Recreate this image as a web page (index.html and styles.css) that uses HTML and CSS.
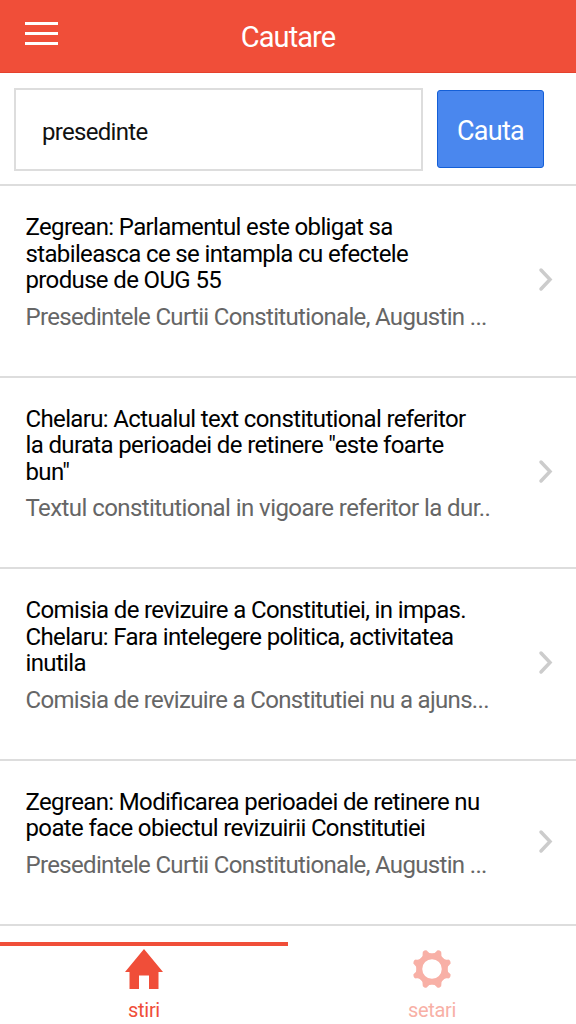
FILE: index.html
```html
<!DOCTYPE html>
<html lang="ro">
<head>
    <meta charset="UTF-8">
    <meta name="viewport" content="width=device-width, initial-scale=1.0">
    <title>Cautare</title>
    <link rel="stylesheet" href="styles.css">
</head>
<body>
    <header class="header">
        <button class="menu-button" aria-label="Meniu">
            <span></span>
            <span></span>
            <span></span>
        </button>
        <h1>Cautare</h1>
    </header>

    <form class="search">
        <input type="text" class="search-input" value="presedinte">
        <button type="button" class="search-button">Cauta</button>
    </form>

    <ul class="results">
        <li class="result">
            <div class="result-text">
                <h2>Zegrean: Parlamentul este obligat sa<br>stabileasca ce se intampla cu efectele<br>produse de OUG 55</h2>
                <p>Presedintele Curtii Constitutionale, Augustin ...</p>
            </div>
            <svg class="arrow" viewBox="0 0 16 25"><path d="M3 3l9 9.5L3 22"/></svg>
        </li>
        <li class="result">
            <div class="result-text">
                <h2>Chelaru: Actualul text constitutional referitor<br>la durata perioadei de retinere "este foarte<br>bun"</h2>
                <p class="wide">Textul constitutional in vigoare referitor la dur..</p>
            </div>
            <svg class="arrow" viewBox="0 0 16 25"><path d="M3 3l9 9.5L3 22"/></svg>
        </li>
        <li class="result">
            <div class="result-text">
                <h2>Comisia de revizuire a Constitutiei, in impas.<br>Chelaru: Fara intelegere politica, activitatea<br>inutila</h2>
                <p>Comisia de revizuire a Constitutiei nu a ajuns...</p>
            </div>
            <svg class="arrow" viewBox="0 0 16 25"><path d="M3 3l9 9.5L3 22"/></svg>
        </li>
        <li class="result result-short">
            <div class="result-text">
                <h2>Zegrean: Modificarea perioadei de retinere nu<br>poate face obiectul revizuirii Constitutiei</h2>
                <p>Presedintele Curtii Constitutionale, Augustin ...</p>
            </div>
            <svg class="arrow" viewBox="0 0 16 25"><path d="M3 3l9 9.5L3 22"/></svg>
        </li>
    </ul>

    <nav class="tabs">
        <a class="tab active">
            <svg class="tab-icon" viewBox="0 0 40 40"><path d="M20 0L1 23h4.500v17H15V26.500h10V40h9.500V23H39z"/></svg>
            <span>stiri</span>
        </a>
        <a class="tab">
            <svg class="tab-icon" viewBox="-20.5 -20.5 41 41">
                <circle r="13" fill="none" stroke="currentColor" stroke-width="6"/>
                <g transform="rotate(22.5)">
                    <path id="tooth" d="M-6.2 -14.500Q-3 -16 -2.800 -18.300Q-2.500 -20.400 0 -20.400Q2.500 -20.400 2.800 -18.300Q3 -16 6.200 -14.500L0 -13z"/>
                    <use href="#tooth" transform="rotate(45)"/>
                    <use href="#tooth" transform="rotate(90)"/>
                    <use href="#tooth" transform="rotate(135)"/>
                    <use href="#tooth" transform="rotate(180)"/>
                    <use href="#tooth" transform="rotate(225)"/>
                    <use href="#tooth" transform="rotate(270)"/>
                    <use href="#tooth" transform="rotate(315)"/>
                </g>
            </svg>
            <span>setari</span>
        </a>
    </nav>
</body>
</html>
```
FILE: styles.css
```css
* {
    box-sizing: border-box;
}
body {
    margin: 0;
    height: 1024px;
    display: flex;
    flex-direction: column;
    background-color: #fff;
    color: #111;
    font-family: Roboto, sans-serif;
    font-feature-settings: "liga" 1;
    overflow: hidden;
}
h1, h2, p, ul {
    margin: 0;
    padding: 0;
    font-weight: normal;
}
.header {
    height: 73px;
    display: grid;
    grid-template-columns: 83px 1fr 83px;
    align-items: center;
    background-color: #f04e39;
    border-bottom: 1px solid #e5412c;
    color: #fff;
}
.header h1 {
    padding-top: 1px;
    font-size: 29px;
    letter-spacing: -0.9px;
    text-align: center;
}
.menu-button {
    width: 33px;
    height: 23px;
    margin: 0 0 5px 25px;
    padding: 0;
    display: flex;
    flex-direction: column;
    justify-content: space-between;
    background: none;
    border: none;
}
.menu-button span {
    height: 3px;
    width: 100%;
    background-color: #fff;
}
.search {
    height: 113px;
    padding: 15px 14px;
    display: flex;
    gap: 14px;
    border-bottom: 2px solid #ddd;
}
.search-input {
    width: 409px;
    height: 83px;
    padding: 5px 25px 0 26px;
    border: 2px solid #ddd;
    color: #111;
    font-family: inherit;
    font-size: 24px;
    letter-spacing: -0.7px;
}
.search-button {
    width: 107px;
    height: 78px;
    margin-top: 2px;
    padding: 3px 0 0;
    background-color: #4a87ee;
    border: 1px solid #145fd7;
    border-radius: 3px;
    color: #fff;
    font-family: inherit;
    font-size: 27px;
    letter-spacing: -0.7px;
}
.results {
    list-style: none;
}
.result {
    height: 191.5px;
    padding: 28px 22px 0 25.5px;
    display: flex;
    justify-content: space-between;
    border-bottom: 2px solid #ddd;
    white-space: nowrap;
}
.result-short {
    height: 165px;
}
.result h2 {
    color: #000;
    font-size: 24px;
    letter-spacing: -0.64px;
    line-height: 26.6px;
}
.result p {
    margin-top: 8px;
    color: #666;
    font-size: 24px;
    letter-spacing: -0.67px;
    line-height: 30px;
}
.result p.wide {
    letter-spacing: -0.57px;
}
.arrow {
    width: 16px;
    height: 25px;
    margin-top: 53px;
    fill: none;
    stroke: #ccc;
    stroke-width: 3.5;
    stroke-linecap: round;
}
.result-short .arrow {
    margin-top: 40px;
}
.tabs {
    flex: 1;
    margin-top: 16px;
    display: flex;
}
.tab {
    flex: 1;
    padding-top: 3px;
    display: flex;
    flex-direction: column;
    align-items: center;
    border-top: 4px solid transparent;
    color: #f8b0a6;
    font-size: 20px;
    letter-spacing: -0.3px;
}
.tab.active {
    border-top-color: #f04e39;
    color: #f04e39;
}
.tab-icon {
    width: 40px;
    height: 40px;
    margin-bottom: 9px;
    fill: currentColor;
}
```
